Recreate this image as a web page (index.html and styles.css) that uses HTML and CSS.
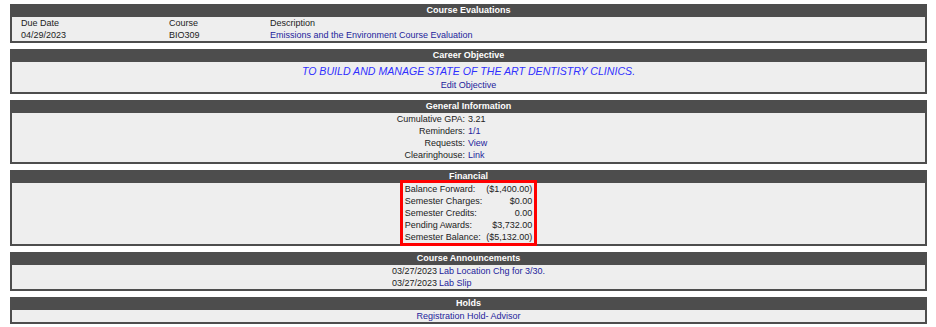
FILE: index.html
```html
<!DOCTYPE html>
<html lang="en">

<head>
    <meta charset="UTF-8">
    <meta name="viewport" content="width=device-width, initial-scale=1.0">
    <title>Student Summary</title>
    <link rel="stylesheet" href="styles.css">
</head>

<body>
    <div class="page">
        <div class="panel">
            <div class="panel-head">Course Evaluations</div>
            <table class="eval-table">
                <colgroup>
                    <col class="col-date">
                    <col class="col-course">
                    <col>
                </colgroup>
                <tr>
                    <td>Due Date</td>
                    <td>Course</td>
                    <td>Description</td>
                </tr>
                <tr>
                    <td>04/29/2023</td>
                    <td>BIO309</td>
                    <td><a href="#">Emissions and the Environment Course Evaluation</a></td>
                </tr>
            </table>
        </div>

        <div class="panel">
            <div class="panel-head">Career Objective</div>
            <div class="objective">
                <div class="objective-text">TO BUILD AND MANAGE STATE OF THE ART DENTISTRY CLINICS.</div>
                <a href="#">Edit Objective</a>
            </div>
        </div>

        <div class="panel">
            <div class="panel-head">General Information</div>
            <table class="info-table">
                <colgroup>
                    <col class="col-label">
                    <col>
                </colgroup>
                <tr>
                    <td class="label">Cumulative GPA:</td>
                    <td>3.21</td>
                </tr>
                <tr>
                    <td class="label">Reminders:</td>
                    <td><a href="#">1/1</a></td>
                </tr>
                <tr>
                    <td class="label">Requests:</td>
                    <td><a href="#">View</a></td>
                </tr>
                <tr>
                    <td class="label">Clearinghouse:</td>
                    <td><a href="#">Link</a></td>
                </tr>
            </table>
        </div>

        <div class="panel">
            <div class="panel-head">Financial</div>
            <div class="financial">
                <table class="money-table">
                    <tr>
                        <td>Balance Forward:</td>
                        <td class="amount">($1,400.00)</td>
                    </tr>
                    <tr>
                        <td>Semester Charges:</td>
                        <td class="amount">$0.00</td>
                    </tr>
                    <tr>
                        <td>Semester Credits:</td>
                        <td class="amount">0.00</td>
                    </tr>
                    <tr>
                        <td>Pending Awards:</td>
                        <td class="amount">$3,732.00</td>
                    </tr>
                    <tr>
                        <td>Semester Balance:</td>
                        <td class="amount">($5,132.00)</td>
                    </tr>
                </table>
            </div>
        </div>

        <div class="panel">
            <div class="panel-head">Course Announcements</div>
            <div class="announce">
                <table class="announce-table">
                    <tr>
                        <td>03/27/2023</td>
                        <td><a href="#">Lab Location Chg for 3/30.</a></td>
                    </tr>
                    <tr>
                        <td>03/27/2023</td>
                        <td><a href="#">Lab Slip</a></td>
                    </tr>
                </table>
            </div>
        </div>

        <div class="panel">
            <div class="panel-head">Holds</div>
            <div class="holds">
                <a href="#">Registration Hold- Advisor</a>
            </div>
        </div>
    </div>
</body>

</html>
```

FILE: styles.css
```css
body {
    font-family: "Liberation Sans", Arial, sans-serif;
    font-size: 9px;
    line-height: 12px;
    color: #222;
    margin: 0;
    padding: 0;
    background-color: #fff;
}

.page {
    display: flex;
    flex-direction: column;
    gap: 6px;
    width: 917px;
    padding: 4px 0 0 10px;
}

.panel {
    background-color: #eee;
    border: 2px solid #4d4d4d;
    border-top: none;
}

.panel-head {
    background-color: #4d4d4d;
    color: #fff;
    font-weight: bold;
    text-align: center;
    height: 13px;
    line-height: 13px;
    margin: 0 -2px;
}

a {
    color: #24249c;
    text-decoration: none;
}

table {
    border-collapse: collapse;
}

td {
    padding: 0;
    white-space: nowrap;
}

/* course evaluations */
.eval-table {
    width: 100%;
    table-layout: fixed;
}

.col-date {
    width: 157px;
}

.col-course {
    width: 101px;
}

.eval-table td:first-child {
    padding-left: 9px;
}

/* career objective */
.objective {
    text-align: center;
    padding-top: 1px;
    padding-bottom: 1px;
}

.objective-text {
    color: #3030ff;
    font-style: italic;
    font-size: 10.6px;
    line-height: 16px;
}

/* general information */
.info-table {
    width: 100%;
    table-layout: fixed;
    margin-bottom: 1px;
}

.col-label {
    width: 455px;
}

.info-table .label {
    text-align: right;
    padding-right: 2px;
}

.info-table td + td {
    padding-left: 1px;
}

/* financial */
.financial {
    padding-bottom: 1px;
}

.money-table {
    margin: 0 auto;
    outline: 3px solid #f00;
}

.money-table td {
    padding: 0 2px;
}

.money-table .amount {
    text-align: right;
}

/* announcements */
.announce-table {
    margin: 0 auto;
}

.announce-table td {
    padding: 0 1px;
}

.holds {
    text-align: center;
}
```
